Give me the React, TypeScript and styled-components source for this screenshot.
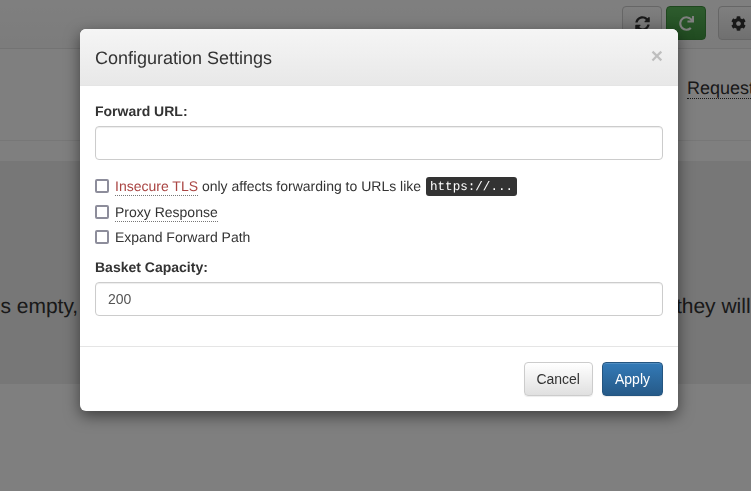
import React from "react";
import styled, { createGlobalStyle } from "styled-components";
import { FaCog, FaRedo, FaSyncAlt } from "react-icons/fa";

const Global = createGlobalStyle`
  html, body { margin: 0; padding: 0; height: 100%; overflow: hidden; background: #fff; }
  #root { height: 100%; }
  * { box-sizing: border-box; }
  body { font-family: "Liberation Sans", Arial, sans-serif; font-size: 14px; line-height: 20px; color: #333; text-rendering: geometricPrecision; }
`;

const Page = styled.div`
  position: relative;
  width: 751px;
  height: 491px;
  overflow: hidden;
`;
const NavBar = styled.div`
  height: 49px;
  padding-top: 6px;
  border-bottom: 1px solid #e7e7e7;
  display: flex;
  justify-content: flex-end;
  gap: 12px;
  margin-right: -7px;
  background: linear-gradient(#fff, #f8f8f8);
`;
const ButtonGroup = styled.div`
  display: flex;
  gap: 4px;
`;
const NavButton = styled.button<{ $green?: boolean }>`
  width: 40px;
  height: 34px;
  border-radius: 4px;
  padding: 0;
  display: flex;
  align-items: center;
  justify-content: center;
  font-size: 15px;
  border: 1px solid ${(p) => (p.$green ? "#3e8f3e" : "#ccc")};
  color: ${(p) => (p.$green ? "#fff" : "#333")};
  background: ${(p) => (p.$green ? "linear-gradient(#5cb85c, #419641)" : "linear-gradient(#fff, #e0e0e0)")};
`;
const TabsRow = styled.div`
  height: 92px;
  border-bottom: 1px solid #eee;
  display: flex;
  padding: 29px 0 0 687px;
  font-size: 18px;
`;
const RequestsTab = styled.span`
  height: 21px;
  white-space: nowrap;
  border-bottom: 1px dotted #333;
  line-height: 21px;
`;
const Jumbotron = styled.div`
  margin-top: 20px;
  height: 223px;
  background: #eee;
  display: flex;
  justify-content: center;
  padding: 134px 0 0 7px;
  font-size: 21px;
  line-height: 23px;
  white-space: nowrap;
`;
const Backdrop = styled.div`
  position: absolute;
  inset: 0;
  background: rgba(0, 0, 0, 0.5);
`;
const Modal = styled.div`
  position: absolute;
  top: 29px;
  left: 80px;
  width: 598px;
  height: 382px;
  background: #fff;
  border-radius: 6px;
  box-shadow: 0 5px 15px rgba(0, 0, 0, 0.5);
  overflow: hidden;
  will-change: transform;
`;
const Header = styled.div`
  height: 57px;
  padding: 1px 15px 0;
  display: flex;
  align-items: center;
  justify-content: space-between;
  background: linear-gradient(#f5f5f5, #e8e8e8);
  border-bottom: 1px solid #e5e5e5;
`;
const Title = styled.h4`
  margin: 0;
  font-size: 18px;
  font-weight: 500;
  line-height: 20px;
`;
const Close = styled.span`
  font-size: 21px;
  font-weight: 700;
  line-height: 1;
  color: #000;
  opacity: 0.2;
  margin-top: -3px;
`;
const Body = styled.div`
  padding: 15px;
  display: flex;
  flex-direction: column;
`;
const FieldLabel = styled.label`
  display: block;
  font-weight: 700;
  margin-bottom: 5px;
`;
const Input = styled.input`
  display: block;
  width: 100%;
  height: 34px;
  padding: 6px 12px;
  font: inherit;
  color: #555;
  border: 1px solid #ccc;
  border-radius: 4px;
  box-shadow: inset 0 1px 1px rgba(0, 0, 0, 0.075);
  outline: none;
  margin-bottom: 15px;
`;
const Checks = styled.div`
  display: flex;
  flex-direction: column;
  gap: 5px;
  margin: 0 0 10px;
`;
const CheckRow = styled.label<{ $tall?: boolean }>`
  display: flex;
  align-items: center;
  min-height: ${(p) => (p.$tall ? 22 : 20)}px;
  white-space: pre;
`;
const Box = styled.span`
  width: 14px;
  height: 14px;
  margin-right: 6px;
  border: 2px solid #8d8d9b;
  border-radius: 2px;
  background: #fff;
  flex: none;
`;
const Hint = styled.span<{ $danger?: boolean }>`
  color: ${(p) => (p.$danger ? "#a94442" : "#333")};
  border-bottom: 1px dotted #777;
  line-height: 18px;
`;
const Code = styled.code`
  font-family: "Liberation Mono", monospace;
  font-size: 12.6px;
  line-height: 18px;
  padding: 1px 4px 0;
  margin-left: 1px;
  background: #333;
  color: #fff;
  border-radius: 3px;
`;
const Footer = styled.div`
  border-top: 1px solid #e5e5e5;
  padding: 15px;
  display: flex;
  justify-content: flex-end;
  gap: 9px;
`;
const Button = styled.button<{ $primary?: boolean }>`
  height: 34px;
  padding: 6px 12px 6px ${(p) => (p.$primary ? 12 : 11)}px;
  font: inherit;
  border-radius: 4px;
  border: 1px solid ${(p) => (p.$primary ? "#245580" : "#ccc")};
  color: ${(p) => (p.$primary ? "#fff" : "#333")};
  background: ${(p) => (p.$primary ? "linear-gradient(#337ab7, #265a88)" : "linear-gradient(#fff, #e0e0e0)")};
  box-shadow: inset 0 1px 0 rgba(255, 255, 255, 0.15), 0 1px 1px rgba(0, 0, 0, 0.075);
`;

export default function App() {
  return (
    <Page>
      <Global />
      <NavBar>
        <ButtonGroup>
          <NavButton><FaSyncAlt /></NavButton>
          <NavButton $green><FaRedo /></NavButton>
        </ButtonGroup>
        <NavButton><FaCog /></NavButton>
      </NavBar>
      <TabsRow>
        <RequestsTab>Requests</RequestsTab>
      </TabsRow>
      <Jumbotron>
        This basket is empty, send requests to http://localhost:55555/basket.names.here and they will appear here.
      </Jumbotron>
      <Backdrop />
      <Modal>
        <Header>
          <Title>Configuration Settings</Title>
          <Close>×</Close>
        </Header>
        <Body>
          <FieldLabel>Forward URL:</FieldLabel>
          <Input />
          <Checks>
            <CheckRow $tall>
              <Box />
              <Hint $danger>Insecure TLS</Hint> only affects forwarding to URLs like <Code>https://...</Code>
            </CheckRow>
            <CheckRow>
              <Box />
              <Hint>Proxy Response</Hint>
            </CheckRow>
            <CheckRow>
              <Box />
              Expand Forward Path
            </CheckRow>
          </Checks>
          <FieldLabel>Basket Capacity:</FieldLabel>
          <Input defaultValue="200" />
        </Body>
        <Footer>
          <Button>Cancel</Button>
          <Button $primary>Apply</Button>
        </Footer>
      </Modal>
    </Page>
  );
}
